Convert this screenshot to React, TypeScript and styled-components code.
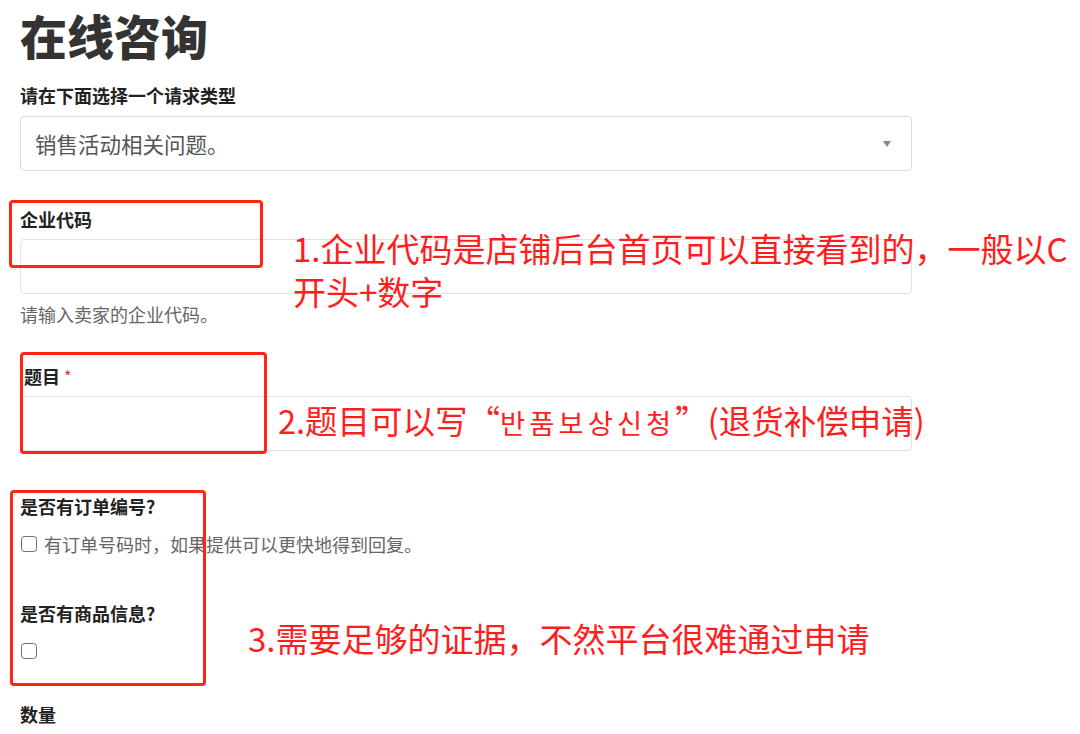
import type { ReactNode } from "react";
import styled, { createGlobalStyle } from "styled-components";

const GlobalStyle = createGlobalStyle`
  html, body {
    margin: 0;
    padding: 0;
    background: #fff;
  }
  body {
    font-family: "Noto Sans CJK SC", "Noto Sans", sans-serif;
    color: #333;
  }
`;

type Note = {
  top: number;
  left: number;
  size: number;
  lines: ReactNode[];
};

type Frame = {
  top: number;
  left: number;
  width: number;
  height: number;
};

const frames: Frame[] = [
  { top: 200, left: 9, width: 254, height: 68 },
  { top: 352, left: 20, width: 247, height: 102 },
  { top: 490, left: 10, width: 196, height: 196 },
];

const App = () => {
  const notes: Note[] = [
    {
      top: 227,
      left: 293,
      size: 33,
      lines: ["1.企业代码是店铺后台首页可以直接看到的，一般以C", "开头+数字"],
    },
    {
      top: 398,
      left: 278,
      size: 32.5,
      lines: [
        <>
          2.题目可以写“<Hangul>반품보상신청</Hangul>”(退货补偿申请)
        </>,
      ],
    },
    {
      top: 617,
      left: 248,
      size: 33,
      lines: ["3.需要足够的证据，不然平台很难通过申请"],
    },
  ];

  return (
    <>
      <GlobalStyle />
      <Page>
        <Form>
          <Title>在线咨询</Title>

          <Label $top={18}>请在下面选择一个请求类型</Label>
          <SelectBox>
            <span>销售活动相关问题。</span>
            <Caret />
          </SelectBox>

          <Label $top={35}>企业代码</Label>
          <TextInput type="text" />
          <Help>请输入卖家的企业代码。</Help>

          <Label $top={36} $indent={4}>
            题目<Required>*</Required>
          </Label>
          <TextInput type="text" />

          <Label $top={42}>是否有订单编号?</Label>
          <CheckRow>
            <Check type="checkbox" />
            <span>有订单号码时，如果提供可以更快地得到回复。</span>
          </CheckRow>

          <Label $top={43}>是否有商品信息?</Label>
          <CheckRow>
            <Check type="checkbox" />
          </CheckRow>

          <Label $top={37}>数量</Label>
        </Form>

        {frames.map((f, i) => (
          <Marker
            key={i}
            $top={f.top}
            $left={f.left}
            $width={f.width}
            $height={f.height}
          />
        ))}

        {notes.map((n, i) => (
          <Annotation key={i} $top={n.top} $left={n.left} $size={n.size}>
            {n.lines.map((line, j) => (
              <div key={j}>{line}</div>
            ))}
          </Annotation>
        ))}
      </Page>
    </>
  );
};

const Page = styled.div`
  position: relative;
  width: 1080px;
  height: 734px;
  overflow: hidden;
  padding: 6px 0 0 20px;
  box-sizing: border-box;
`;

const Form = styled.div`
  width: 892px;
  display: flex;
  flex-direction: column;
`;

const Title = styled.h1`
  margin: 0;
  font-size: 47px;
  line-height: 58px;
  font-weight: 900;
  color: #333;
`;

const Label = styled.label<{ $top: number; $indent?: number }>`
  display: block;
  margin-top: ${(p) => p.$top}px;
  padding-left: ${(p) => p.$indent ?? 0}px;
  font-size: 18px;
  line-height: 26px;
  font-weight: 700;
  color: #222;
`;

const Required = styled.span`
  margin-left: 4px;
  color: #e0332b;
  font-size: 16px;
  font-weight: 400;
  vertical-align: top;
`;

const SelectBox = styled.div`
  margin-top: 8px;
  height: 55px;
  box-sizing: border-box;
  border: 1px solid #dcdcdc;
  border-radius: 4px;
  padding: 0 20px 0 14px;
  display: flex;
  align-items: center;
  justify-content: space-between;
  font-size: 21.5px;
  color: #555;
`;

const Caret = styled.span`
  width: 0;
  height: 0;
  border-left: 4px solid transparent;
  border-right: 4px solid transparent;
  border-top: 6px solid #8a8a8a;
`;

const TextInput = styled.input`
  margin-top: 7px;
  height: 55px;
  box-sizing: border-box;
  border: 1px solid #e2e2e2;
  border-radius: 4px;
  padding: 0 14px;
  font: inherit;
  font-size: 18px;
  background: #fff;
  outline: none;
`;

const Help = styled.div`
  margin-top: 7px;
  font-size: 18px;
  line-height: 26px;
  color: #666;
`;

const CheckRow = styled.div`
  margin-top: 12px;
  display: flex;
  align-items: center;
  gap: 7px;
  height: 26px;
  padding-left: 1px;
  font-size: 18px;
  color: #666;
`;

const Check = styled.input`
  appearance: none;
  margin: 0;
  width: 16px;
  height: 16px;
  border: 1.5px solid #6f6f6f;
  border-radius: 3.5px;
  background: #fff;
  box-sizing: border-box;
`;

const Marker = styled.div<{
  $top: number;
  $left: number;
  $width: number;
  $height: number;
}>`
  position: absolute;
  top: ${(p) => p.$top}px;
  left: ${(p) => p.$left}px;
  width: ${(p) => p.$width}px;
  height: ${(p) => p.$height}px;
  box-sizing: border-box;
  border: 3px solid #ff2414;
  border-radius: 4px;
`;

const Annotation = styled.div<{ $top: number; $left: number; $size: number }>`
  position: absolute;
  top: ${(p) => p.$top}px;
  left: ${(p) => p.$left}px;
  font-size: ${(p) => p.$size}px;
  line-height: 43px;
  color: #ff1e1e;
  white-space: nowrap;
`;

const Hangul = styled.span`
  font-size: 0.84em;
  letter-spacing: 0.15em;
`;

export default App;
